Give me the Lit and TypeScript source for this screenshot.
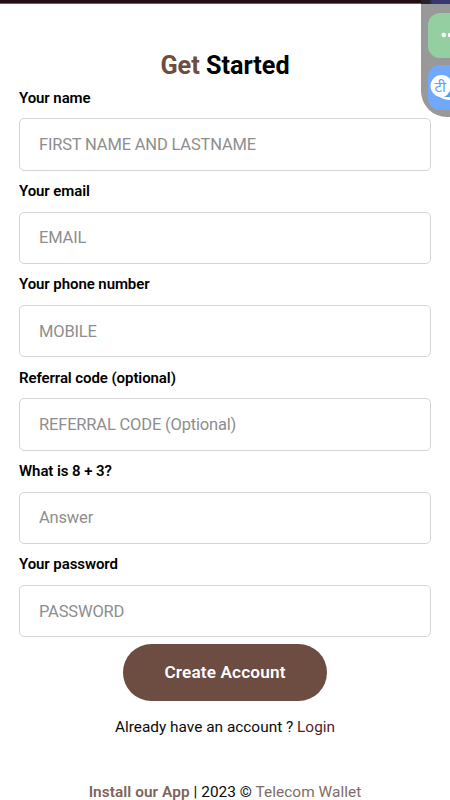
import { LitElement, html, css } from "lit";
import { customElement, state } from "lit/decorators.js";

interface Field {
  label: string;
  hint: string;
  type: string;
}

@customElement("edge-panel")
class EdgePanel extends LitElement {
  static styles = css`
    :host {
      display: block;
      box-sizing: border-box;
      width: 60px;
      height: 117px;
      padding: 13px 0 0 7px;
      background: #999;
      border-radius: 0 0 26px 26px;
      overflow: hidden;
    }
    .strip {
      position: absolute;
      left: 0;
      top: 0;
      width: 60px;
      height: 4px;
      background: linear-gradient(90deg, #252329 0 8px, #37386f 12px);
    }
    .tile {
      display: block;
      width: 46px;
      height: 45px;
      margin-bottom: 7px;
    }
  `;
  render() {
    return html`
      <div class="strip"></div>
      <svg class="tile" viewBox="0 0 46 45">
        <rect width="46" height="45" rx="12" fill="#93cfa0" />
        <circle cx="15.7" cy="22" r="2.3" fill="#fff" />
        <circle cx="22.2" cy="22" r="2.3" fill="#fff" />
        <circle cx="28.7" cy="22" r="2.3" fill="#fff" />
      </svg>
      <svg class="tile" viewBox="0 0 46 45">
        <rect width="46" height="45" rx="12" fill="#70a8fb" />
        <path d="M8 28 Q13 36 25 35 L32 35 V14 H20Z" fill="#fff" />
        <circle cx="30" cy="21" r="10" fill="#d8f2ff" />
        <circle cx="13.5" cy="21" r="11" fill="#fff" />
        <path d="M16 32 Q20 30 22 26 V32Z" fill="#5a9bea" />
        <text x="6.5" y="27" font-size="15" font-family="Noto Sans, Noto Sans Devanagari, sans-serif" fill="#629ff0">टी</text>
      </svg>
    `;
  }
}

@customElement("app-root")
class AppRoot extends LitElement {
  static styles = css`
    :host {
      display: block;
      position: relative;
      height: 800px;
      overflow: hidden;
      background: #fff;
      color: #0b0b0b;
      font-family: Roboto, sans-serif;
    }
    .status {
      height: 4px;
      background: linear-gradient(#230f13 0 3px, #6b5f61 3px);
    }
    edge-panel {
      position: absolute;
      left: 421px;
      top: 0;
    }
    .page {
      display: flex;
      flex-direction: column;
      align-items: center;
      padding: 44.6px 19px 0;
    }
    h1 {
      margin: 0;
      height: 29px;
      line-height: 34px;
      font-size: 25.2px;
      font-weight: 700;
      color: #000;
      white-space: pre;
    }
    .brand {
      color: #6d4c41;
    }
    form {
      align-self: stretch;
      display: flex;
      flex-direction: column;
    }
    label {
      display: block;
      height: 93.33px;
      font-size: 15px;
      font-weight: 600;
      line-height: 41.8px;
      letter-spacing: -0.08px;
      color: #000;
    }
    input {
      display: block;
      box-sizing: border-box;
      width: 100%;
      height: 52.2px;
      margin: -1px 0 0;
      padding: 0 19px;
      border: 1px solid #d5d5d5;
      border-radius: 5px;
      outline: none;
      background: #fff;
      font: 400 16.5px Roboto, sans-serif;
      letter-spacing: -0.18px;
      color: #222;
    }
    input::placeholder {
      color: #8e8e8e;
      opacity: 1;
    }
    button {
      align-self: center;
      width: 204px;
      height: 57px;
      margin-top: 6.4px;
      padding: 0;
      border: 0;
      border-radius: 29px;
      background: #6d4c41;
      color: #fff;
      font: 600 17.2px Roboto, sans-serif;
      letter-spacing: 0.14px;
    }
    p,
    footer {
      margin: 0;
      font-size: 15.4px;
      line-height: 20px;
      white-space: pre;
    }
    p {
      margin-top: 16.5px;
    }
    footer {
      margin-top: 45px;
      letter-spacing: 0.05px;
    }
    a {
      text-decoration: none;
      color: #4e261f;
    }
    footer a {
      color: #806c65;
    }
    footer a.install {
      font-weight: 600;
      color: #806459;
    }
  `;

  @state() private fields: Field[] = [
    { label: "Your name", hint: "FIRST NAME AND LASTNAME", type: "text" },
    { label: "Your email", hint: "EMAIL", type: "email" },
    { label: "Your phone number", hint: "MOBILE", type: "tel" },
    { label: "Referral code (optional)", hint: "REFERRAL CODE (Optional)", type: "text" },
    { label: "What is 8 + 3?", hint: "Answer", type: "text" },
    { label: "Your password", hint: "PASSWORD", type: "password" },
  ];

  render() {
    return html`
      <div class="status"></div>
      <main class="page">
        <h1><span class="brand">Get</span> Started</h1>
        <form>
          ${this.fields.map(
            (f) => html`<label>${f.label}<input type=${f.type} placeholder=${f.hint} /></label>`
          )}
          <button type="button">Create Account</button>
        </form>
        <p>Already have an account ? <a>Login</a></p>
        <footer><a class="install">Install our App</a> | 2023 © <a>Telecom Wallet</a></footer>
      </main>
      <edge-panel></edge-panel>
    `;
  }
}
